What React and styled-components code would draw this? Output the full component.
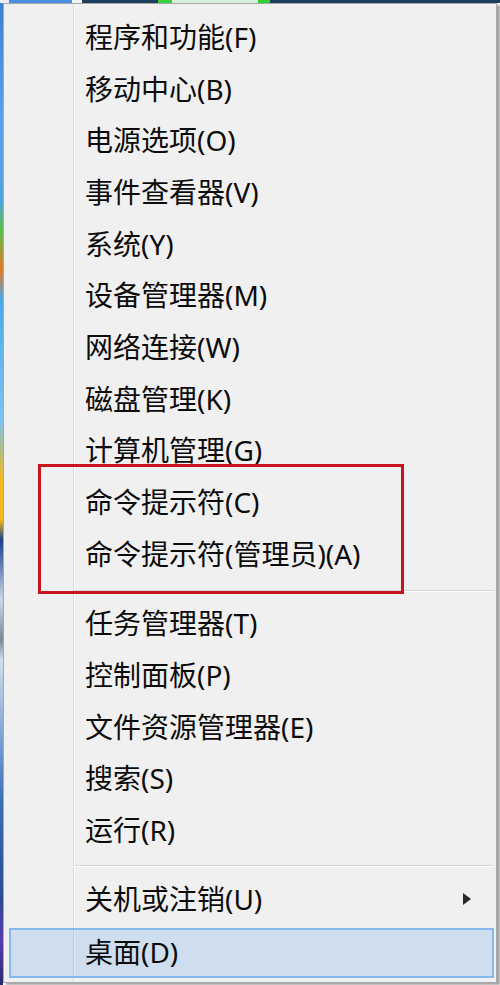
import React from 'react';
import styled, { createGlobalStyle } from 'styled-components';

const GlobalStyle = createGlobalStyle`
    html, body {
        margin: 0;
        padding: 0;
        background: #ffffff;
    }
    #root {
        width: 500px;
        height: 985px;
        overflow: hidden;
    }
`;

/* desktop peeking out at top and left edge */
const Desktop = styled.div`
    width: 500px;
    height: 985px;
    box-sizing: border-box;
    padding: 3px 0 0 3px;
    background:
        linear-gradient(to right,
            #e8eef4 0px, #e8eef4 9px,
            #4a8fdf 9px, #4a8fdf 72px,
            #f2f2f2 72px, #f2f2f2 82px,
            #1d3d5e 82px, #1d3d5e 158px,
            #3ccf3c 158px, #3ccf3c 172px,
            #d8f0d8 172px, #d8f0d8 258px,
            #2fcf2f 258px, #2fcf2f 270px,
            #1d3d5e 270px) top left / 100% 3px no-repeat,
        linear-gradient(to bottom,
            #3f7fd0 0px, #5ea0e8 120px,
            #4fa3e0 200px, #5bbf4a 230px,
            #e07a2a 270px, #4aa8e8 300px,
            #7cc4f0 420px, #f0b81c 480px,
            #f0b81c 520px, #1c3f8a 540px,
            #c8d8e8 600px, #7a8898 640px,
            #d0e0f0 660px, #3a70b8 800px,
            #2a4a90 900px, #5a3ab0 940px,
            #2a2a6a 985px) top left / 3px 100% no-repeat,
        #ffffff;
`;

const Menu = styled.div`
    position: relative;
    width: 494px;
    height: 980px;
    box-sizing: border-box;
    border: 1px solid #a8a8a8;
    padding: 8px 2px 0 5px;
    display: flex;
    flex-direction: column;
    box-shadow: 3px 2px 2px rgba(90, 90, 90, 0.55);
    background:
        linear-gradient(to right,
            transparent 69px,
            #dadada 69px, #dadada 70px,
            #ffffff 70px, #ffffff 71px,
            transparent 71px),
        #f0f0f0;
    font-family: "Noto Sans", "Noto Sans CJK SC", sans-serif;
`;

const Item = styled.div`
    height: ${p => p.$h || 51.7}px;
    margin-top: ${p => p.$mt || 0}px;
    box-sizing: border-box;
    display: flex;
    align-items: center;
    padding-left: 74px;
    padding-right: 21px;
    padding-bottom: 2px;
    border: 2px solid ${p => (p.$active ? '#86b9ee' : 'transparent')};
    background: ${p => (p.$active ? 'rgba(110, 170, 235, 0.26)' : 'transparent')};
    font-size: 28px;
    color: #0c0c0c;
    white-space: nowrap;
`;

const Label = styled.span`
    flex: 1;
    line-height: 1;
`;

const SubArrow = styled.span`
    width: 0;
    height: 0;
    border-left: 8px solid #2a2a2a;
    border-top: 6.5px solid transparent;
    border-bottom: 6.5px solid transparent;
`;

const Separator = styled.div`
    height: ${p => p.$h}px;
    margin-left: 64px;
    display: flex;
    flex-direction: column;
    justify-content: flex-start;
    padding-top: ${p => p.$line}px;
    box-sizing: border-box;

    &::after {
        content: "";
        display: block;
        height: 1px;
        background: #d6d6d6;
        border-bottom: 1px solid #ffffff;
    }
`;

/* red annotation frame drawn over the menu */
const Highlight = styled.div`
    position: absolute;
    left: 34px;
    top: 460px;
    width: 366px;
    height: 130px;
    box-sizing: border-box;
    border: 3px solid #c8141e;
    pointer-events: none;
`;

const groupA = [
    '程序和功能(F)',
    '移动中心(B)',
    '电源选项(O)',
    '事件查看器(V)',
    '系统(Y)',
    '设备管理器(M)',
    '网络连接(W)',
    '磁盘管理(K)',
    '计算机管理(G)',
    '命令提示符(C)',
    '命令提示符(管理员)(A)',
];

const groupB = [
    '任务管理器(T)',
    '控制面板(P)',
    '文件资源管理器(E)',
    '搜索(S)',
    '运行(R)',
];

const App = () => {
    return (
        <>
            <GlobalStyle />
            <Desktop>
                <Menu>
                    {groupA.map(t => (
                        <Item key={t}><Label>{t}</Label></Item>
                    ))}
                    <Separator $h={18} $line={9} />
                    {groupB.map(t => (
                        <Item key={t}><Label>{t}</Label></Item>
                    ))}
                    <Separator $h={17} $line={8} />
                    <Item>
                        <Label>关机或注销(U)</Label>
                        <SubArrow />
                    </Item>
                    <Item $active $mt={2} $h={50}>
                        <Label>桌面(D)</Label>
                    </Item>
                    <Highlight />
                </Menu>
            </Desktop>
        </>
    );
};

export default App;
